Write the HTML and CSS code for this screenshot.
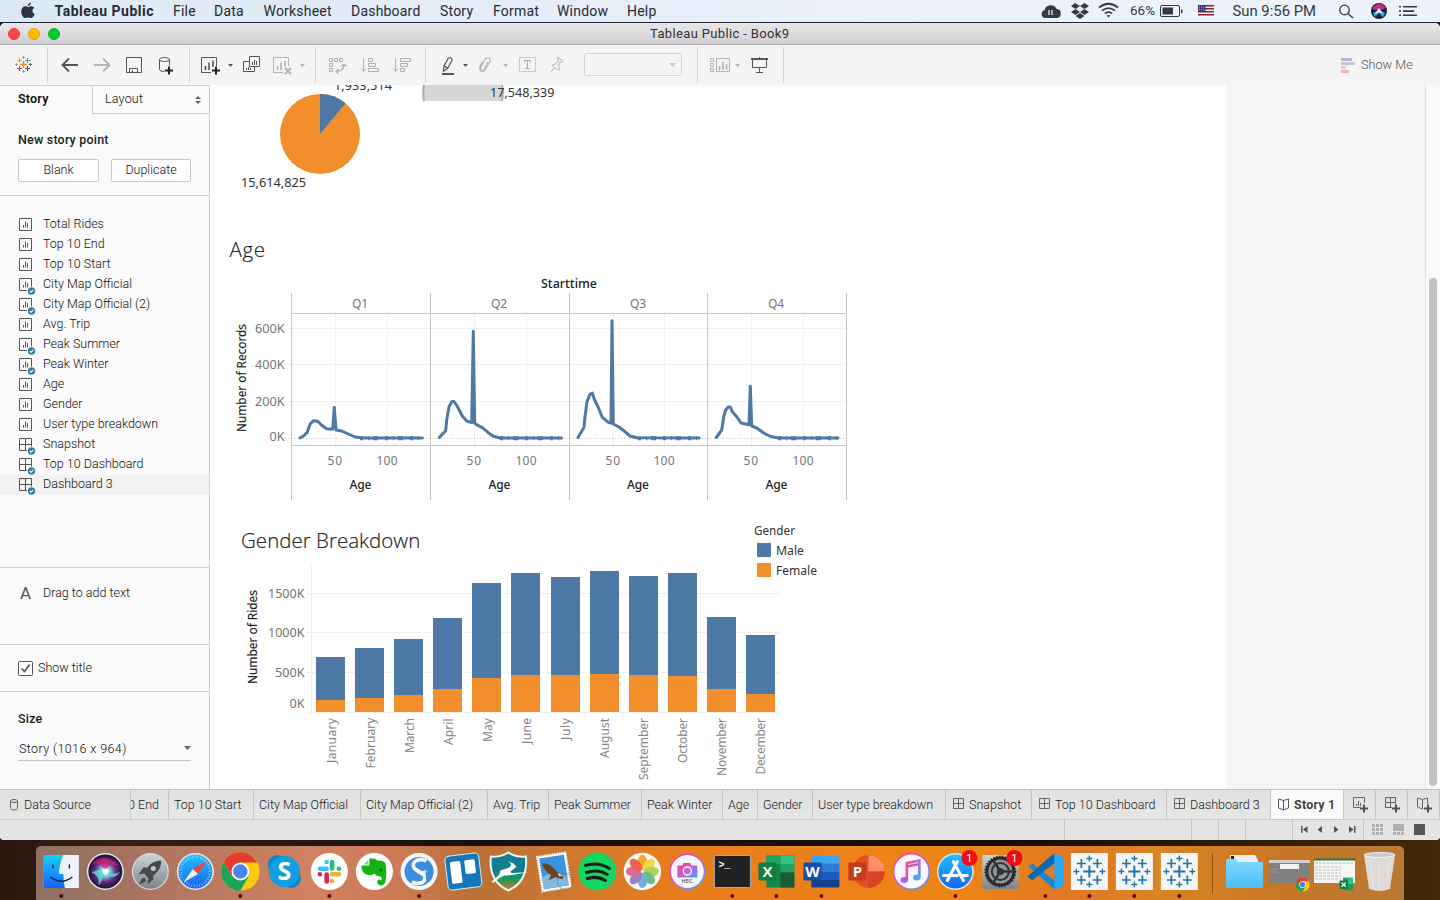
FILE: index.html
```html
<!DOCTYPE html>
<html lang="en">
<head>
<meta charset="utf-8">
<title>Tableau Public - Book9</title>
<link rel="stylesheet" href="styles.css">
</head>
<body>
<svg class="defs" width="0" height="0">
  <defs>
    <linearGradient id="gBlue" x1="0" y1="0" x2="0" y2="1"><stop offset="0" stop-color="#1fc2fb"/><stop offset="1" stop-color="#1a63f0"/></linearGradient>
    <linearGradient id="gFinder" x1="0" y1="0" x2="0" y2="1"><stop offset="0" stop-color="#14d0fd"/><stop offset="1" stop-color="#1662f5"/></linearGradient>
    <linearGradient id="gGrey" x1="0" y1="0" x2="0" y2="1"><stop offset="0" stop-color="#c9d3d8"/><stop offset="1" stop-color="#808587"/></linearGradient>
    <linearGradient id="gNote" x1="0" y1="0" x2="1" y2="1"><stop offset="0" stop-color="#fb4470"/><stop offset=".5" stop-color="#c85ce0"/><stop offset="1" stop-color="#35a9f7"/></linearGradient>
    <linearGradient id="gShield" x1="0" y1="0" x2="0" y2="1"><stop offset="0" stop-color="#137e98"/><stop offset=".5" stop-color="#137e88"/><stop offset=".7" stop-color="#159c5a"/><stop offset="1" stop-color="#e86a1c"/></linearGradient>
    <linearGradient id="gFolder" x1="0" y1="0" x2="0" y2="1"><stop offset="0" stop-color="#7fdcff"/><stop offset="1" stop-color="#4fbcf3"/></linearGradient>
    <radialGradient id="gSiri"><stop offset="0" stop-color="#fff"/><stop offset=".25" stop-color="#8fd8ea"/><stop offset=".6" stop-color="#6b2a86"/><stop offset="1" stop-color="#171230"/></radialGradient>
    <symbol id="sheet" viewBox="0 0 18 18"><path d="M.5 1.500h12v12h-12zM4.500 10.500V8M6.500 10.500V4.500M8.500 10.500V6" fill="none" stroke="#555"/></symbol>
    <symbol id="dash" viewBox="0 0 18 18"><path d="M.5 1.500h12v12h-12zM6.500 1.500v12M.5 7.500h12" fill="none" stroke="#555"/></symbol>
    <symbol id="check" viewBox="0 0 18 18"><circle cx="12.500" cy="14" r="4.600" fill="#fafafa"/><circle cx="12.500" cy="14" r="3.700" fill="#2e7fa3"/><path d="M10.800 14l1.300 1.300 2.200-2.500" fill="none" stroke="#fff" stroke-width="1.100"/></symbol>
    <symbol id="tableau" viewBox="-22 -22 44 44" overflow="visible">
      <path d="M-18.500-18.500h37v37h-37z" fill="#f4f6f8"/>
      <g fill="none" stroke="#2274a6" stroke-width="2"><path d="M-6 0h12M0-6v12"/><path stroke-width="1.700" d="M-12.500-8h9M-8-12.500v9M3.500-8h9M8-12.500v9M-12.500 8.500h9M-8 4v9M3.500 8.500h9M8 4v9"/><path stroke-width="1.300" d="M-3-13h6M0-16v6M-3 13h6M0 10v6M-16 0h6M-13-3v6M10 0h6M13-3v6"/></g>
    </symbol>
    <symbol id="chrome" viewBox="-20 -20 40 40" overflow="visible">
      <circle r="19.300" fill="#fbc90e"/><path d="M-16.700-9.600L-8.400 4.800-3 8.500 0 19.300A19.300 19.300 0 0 1-16.700-9.600z" fill="#1da45a"/><path d="M0 19.300L8.400 4.700-8 4z" fill="#1da45a"/><path d="M0-19.300A19.300 19.300 0 0 1 16.700-9H0L-8 5-16.700-9.600A19.300 19.300 0 0 1 0-19.300z" fill="#e33b2e"/>
      <circle r="8.900" fill="#fff"/><circle r="7.200" fill="#4a83ee"/>
    </symbol>
    <symbol id="xbadge" viewBox="0 0 20 20"><path d="M5 1h14v18H5z" fill="#1d9c5b"/><path d="M12 1h7v9h-7z" fill="#2fc77f"/><path d="M0 5h12v12H0z" fill="#107c41"/><path d="M3 8l6 6M9 8l-6 6" stroke="#fff" stroke-width="1.800"/></symbol>
  </defs>
</svg>

<header class="menubar">
  <svg class="apple" width="16" height="18" viewBox="0 0 16 18"><path d="M10.800.8c.1 1.600-1.300 3.200-2.900 3.200C7.700 2.500 9.200.9 10.800.8zM8 5c.8 0 1.700-.9 3.200-.8 1.200.1 2.300.6 3 1.600-2.600 1.600-2.200 5.200.5 6.300-.5 1.500-1.900 4-3.500 4-1.200 0-1.600-.7-3-.7s-1.900.7-3 .7C3.300 16.100 1.200 12.700 1.200 9.500c0-3.200 2-5.200 4-5.200C6.500 4.300 7.300 5 8 5z" fill="#2c333c"/></svg>
  <nav class="menus"><b class="m0">Tableau Public</b><span class="m1">File</span><span class="m2">Data</span><span class="m3">Worksheet</span><span class="m4">Dashboard</span><span class="m5">Story</span><span class="m6">Format</span><span class="m7">Window</span><span class="m8">Help</span></nav>
  <svg class="tray" width="410" height="22" viewBox="1030 0 410 22" fill="#333a43">
    <path d="M1045 18a4 4 0 0 1-.5-7.800 6.500 6.500 0 0 1 12-1.500 4.700 4.700 0 0 1 .5 9.300z"/><path d="M1049 10v5M1052 10v5" stroke="#eaf0f8" stroke-width="1.300"/>
    <path d="M1075 3l5 3-4.500 3-4.500-3zM1084.500 3l4.500 3-4.500 3-4.500-3zM1071 12l4.500-3 4.500 3-4.500 3zM1080 12l4.500-3 4.500 3-4.500 3zM1075.500 16l4.500-3 4.500 3-4.500 3z"/>
    <g fill="none" stroke="#333a43" stroke-width="1.700"><path d="M1099 7.500q9.500-7.500 19 0M1102 10.600q6.500-5 13 0M1105 13.500q3.500-2.700 7 0"/></g><path d="M1106.500 15.300h4l-2 2.300z"/>
    <text x="1130" y="15" textLength="25" lengthAdjust="spacingAndGlyphs" class="tray-pct">66%</text>
    <rect x="1160.500" y="5.500" width="19" height="11" rx="1.500" fill="none" stroke="#333a43"/><path d="M1162.500 7.500h10.500v7h-10.500zM1181 9.500h1.500v3.500h-1.500z"/>
    <path d="M1198 5h16v11h-16z" fill="#eee"/><path d="M1198 5.700h16M1198 8.700h16M1198 11.700h16M1198 14.700h16" stroke="#8c2232" stroke-width="1.400"/><path d="M1198 5h7.500v6.500h-7.500z" fill="#3a397c"/><path d="M1199 7h6M1199 9.500h6" stroke="#bbb" stroke-dasharray="1 1"/>
    <text x="1232.500" y="16" textLength="83.500" lengthAdjust="spacingAndGlyphs" class="tray-clock">Sun 9:56 PM</text>
    <circle cx="1344.500" cy="10" r="4.800" fill="none" stroke="#333a43" stroke-width="1.300"/><path d="M1348 13.500l5 4.500" stroke="#333a43" stroke-width="1.500"/>
    <circle cx="1379" cy="11" r="8" fill="#172041"/><path d="M1372.500 9a7 7 0 0 1 13-1l-6.500 3z" fill="#c3288f"/><path d="M1373 13l6-3 6 3-2 4-4-4-4 4z" fill="#3fa3dc"/><path d="M1379 8l-4 6 4-2 4 2z" fill="#fff"/>
    <path d="M1399 6h2v1.500h-2zM1399 10.300h2v1.500h-2zM1399 14.500h2v1.500h-2zM1403 6h14v1.600h-14zM1403 10.300h11v1.600h-11zM1403 14.500h14v1.600h-14z"/>
  </svg>
</header>

<main class="window">
  <div class="titlebar"><div class="lights"><i class="red"></i><i class="amber"></i><i class="green"></i></div><span>Tableau Public - Book9</span></div>

  <div class="toolbar">
    <svg class="group" width="48" height="36" viewBox="0 47 48 36" fill="none"><path d="M20 64.500h7M23.500 61v7" stroke="#eb8c32" stroke-width="1.600"/><path d="M17 60.500h5M19.500 58v5" stroke="#e5a04c"/><path d="M25 60.500h5M27.500 58v5" stroke="#5d8f9c"/><path d="M17 68.500h5M19.500 66v5" stroke="#c4364e"/><path d="M25 68.500h5M27.500 66v5" stroke="#35507c"/><path d="M22 57.500h3M23.500 56v3M22 71.500h3M23.500 70v3M15 64.500h3M16.500 63v3" stroke="#8ba4c0"/><path d="M29 64.500h3M30.500 63v3" stroke="#6c5f98"/></svg>
    <svg class="group" width="142" height="36" viewBox="48 47 142 36" fill="none" stroke="#555">
      <path d="M78 65H63M69 58.500L62.500 65l6.500 6.500" stroke-width="1.800"/><path d="M94 65h15M103 58.500l6.500 6.500-6.500 6.500" stroke="#b4b4b4" stroke-width="1.800"/>
      <path d="M126.500 57.500h15v15h-15zM129.500 72.500v-4h8v4M132.500 72v-2"/><path d="M159.500 59.500v10q0 2 5 2M169.500 59.500v6"/><ellipse cx="164.500" cy="59.500" rx="5" ry="2"/><path d="M165 70.500h8M169 66.500v8" stroke="#222" stroke-width="2"/>
    </svg>
    <svg class="group" width="126" height="36" viewBox="190 47 126 36" fill="none" stroke="#555">
      <path d="M211 72.500h-9.500v-15h15V66"/><path d="M205.500 70v-4M209 70v-7.500M213 67v-6.500" stroke-width="1.600"/><path d="M212 70.500h8M216 66.500v8" stroke="#222" stroke-width="2"/><path d="M228 64h5l-2.500 3z" fill="#555" stroke="none"/>
      <path d="M249.500 56.500h10v10h-10zM252.500 65v-3M254.500 65v-5M256.500 65v-4M249 61.500h-5.500v10h11V67M246.500 70v-2M248.500 70v-3M250.500 70v-2"/>
      <g stroke="#b4b4b4"><path d="M283 72.500h-9.500v-15h15V66"/><path d="M277.500 70v-4M281 70v-7.500M285 66v-5" stroke-width="1.600"/><path d="M285 68l6 6M291 68l-6 6" stroke-width="2"/></g><path d="M300 64h5l-2.500 3z" fill="#b4b4b4" stroke="none"/>
    </svg>
    <svg class="group" width="110" height="36" viewBox="316 47 110 36" fill="none" stroke="#b0b0b0">
      <path d="M329.500 58.500h3v3h-3zM334.500 58.500h3v3h-3zM339.500 58.500h3v3h-3zM329.500 63.500h3v3h-3zM329.500 68.500h3v3h-3z"/><path d="M336 71.500q8 0 8-7M341.500 66.500l2.500-2.500 2.500 2.500M338.500 69l-2.500 2.500 2.500 2.500" stroke-width="1.200"/>
      <path d="M363.500 58v13M361 68.500l2.500 3 2.500-3M368.500 58.500h4v3h-4zM368.500 63.500h7v3h-7zM368.500 68.500h10v3h-10z"/><path d="M395.500 58v13M393 68.500l2.500 3 2.500-3M400.500 58.500h10v3h-10zM400.500 63.500h7v3h-7zM400.500 68.500h4v3h-4z"/>
    </svg>
    <svg class="group" width="272" height="36" viewBox="426 47 272 36" fill="none" stroke="#555">
      <path d="M443.500 71l.5-5 4.500-8q1-1 2.500 0t1 2.500l-4.500 8zM444.500 66l3.500 2.500" stroke-width="1.200"/><path d="M442 74h12" stroke-width="2"/><path d="M463 64h5l-2.500 3z" fill="#555" stroke="none"/>
      <path d="M482 62l-2 4.500q-1 4 1.500 5t4-2l4.500-8q1-3-1.500-3.500t-4 2l-4 8q0 2 1.500 2t2-1l4-7" stroke="#b4b4b4" stroke-width="1.200"/><path d="M503 64h5l-2.500 3z" fill="#b4b4b4" stroke="none"/>
      <path d="M519.500 57.500h16v14h-16z" stroke="#b4b4b4" stroke-dasharray="2 1"/><path d="M524.500 62.500v-2h6v2M527.500 60.500v8M525.500 68.500h4" stroke="#aaa"/>
      <path d="M557 57l6 4-1 1.500-2-.5-1.500 4 1.500 3-1.500 1-6-4 .5-1.500 3-.5 2.500-4zM555 67l-4 5" stroke="#b4b4b4"/>
      <rect x="584.500" y="53.500" width="97" height="22" rx="1" stroke="#d3d3d3"/><path d="M669 63h7l-3.500 4z" fill="#c8c8c8" stroke="none"/>
    </svg>
    <svg class="group" width="86" height="36" viewBox="698 47 86 36" fill="none" stroke="#b4b4b4">
      <path d="M710.500 58.500h3v3h-3zM710.500 63.500h3v3h-3zM710.500 68.500h3v3h-3zM716.500 58.500h13v13h-13z"/><path d="M719.500 70v-4M723 70v-8.500M726.500 70v-6" stroke-width="1.700"/><path d="M735 64h5l-2.500 3z" fill="#b4b4b4" stroke="none"/>
      <g stroke="#555"><path d="M751 59h17" stroke-width="2"/><path d="M752.500 59v8.500h14V59M759.500 57v2M759.500 67.500v5M756 72.500h7"/></g>
    </svg>
    <div class="showme"><svg width="15" height="16"><path d="M0 1h11v3H0z" fill="#bcb2c8"/><path d="M0 5h14v3H0z" fill="#b8cbe2"/><path d="M0 9h5v3H0z" fill="#f3cfb4"/><path d="M0 13h8v3H0z" fill="#f5b3b9"/></svg><span>Show Me</span></div>
  </div>

  <div class="body">
    <aside class="side">
      <div class="sidetabs"><b>Story</b><div class="layout"><span>Layout</span><svg width="6" height="8"><path d="M0 3l3-3 3 3zM0 5h6L3 8z" fill="#666"/></svg></div></div>
      <section class="newpoint"><h3>New story point</h3><div class="btns"><button>Blank</button><button>Duplicate</button></div></section>
      <ul class="sheets">
        <li><svg><use href="#sheet"/></svg>Total Rides</li>
        <li><svg><use href="#sheet"/></svg>Top 10 End</li>
        <li><svg><use href="#sheet"/></svg>Top 10 Start</li>
        <li><svg><use href="#sheet"/><use href="#check"/></svg>City Map Official</li>
        <li><svg><use href="#sheet"/><use href="#check"/></svg>City Map Official (2)</li>
        <li><svg><use href="#sheet"/></svg>Avg. Trip</li>
        <li><svg><use href="#sheet"/><use href="#check"/></svg>Peak Summer</li>
        <li><svg><use href="#sheet"/><use href="#check"/></svg>Peak Winter</li>
        <li><svg><use href="#sheet"/></svg>Age</li>
        <li><svg><use href="#sheet"/></svg>Gender</li>
        <li><svg><use href="#sheet"/></svg>User type breakdown</li>
        <li><svg><use href="#dash"/><use href="#check"/></svg>Snapshot</li>
        <li><svg><use href="#dash"/><use href="#check"/></svg>Top 10 Dashboard</li>
        <li class="on"><svg><use href="#dash"/><use href="#check"/></svg>Dashboard 3</li>
      </ul>
      <section class="dragtext"><span class="bigA">A</span>Drag to add text</section>
      <section class="showtitle"><svg width="15" height="15"><rect x=".5" y=".5" width="14" height="14" rx="1" fill="#fff" stroke="#555"/><path d="M3.500 7.500l3 3 5-7" fill="none" stroke="#555" stroke-width="1.700"/></svg><span>Show title</span></section>
      <section class="size"><h3>Size</h3><div class="select">Story (1016 x 964)<svg width="7" height="4"><path d="M0 0h7L3.500 4z" fill="#666"/></svg></div></section>
    </aside>

    <div class="canvas">
      <svg class="chart" width="660" height="148" viewBox="210 85 660 148">
        <text x="334" y="90" textLength="58" lengthAdjust="spacingAndGlyphs">1,933,514</text>
        <circle cx="320" cy="134" r="40" fill="#f28e2b"/><path d="M320 134V94A40 40 0 0 1 345.500 103.200z" fill="#4e79a7"/>
        <text x="241" y="187" textLength="65" lengthAdjust="spacingAndGlyphs">15,614,825</text>
        <path d="M424 85h78v16h-78z" fill="#d6d6d6"/><path d="M424 85q-1.500 8 0 16M502 85q1.500 8 0 16" fill="none" stroke="#aaa" stroke-width="2"/>
        <text x="490" y="97" textLength="64.500" lengthAdjust="spacingAndGlyphs">17,548,339</text>
      </svg>
      <h2 class="age-title">Age</h2>
      <svg class="chart" width="660" height="237" viewBox="210 268 660 237">
        <path d="M287 328.500h560M287 364.500h560M287 401.500h560M335.500 314v136M387.500 314v136M474.500 314v136M526.500 314v136M613.500 314v136M664.500 314v136M751.500 314v136M803.500 314v136" stroke="#f1f1f1"/>
        <path d="M285 438.500h562" stroke="#c8c8c8" stroke-dasharray="1 2"/>
        <path d="M291.500 293v207M430.500 293v207M569.500 293v207M707.500 293v207M846.500 293v207M291 313.500h556M291 445.500h556" stroke="#c6c6c6"/>
        <g fill="none" stroke="#4e79a7" stroke-width="3" stroke-linejoin="round" stroke-linecap="round">
          <path d="M300 438l3.500-2 3.500-3.300 3-8.400 3.300-3.600 4.400.6 4 4 5 3.400 6 .6 1.600-22 1.700 22.700 5.700 1 6.600 3 6.700 3 10 1h57.300"/>
          <path d="M439.300 437.500l6.400-6.800 1-10.700 2.300-13.300 2.700-5 2-.4 3.300 4.400 5.300 10.300 4.400 5 5 1.700 1.600-91.400 1.400 92 3.600 2.400 4 2 6 5 5 3.600 6.700 1.700h61.500"/>
          <path d="M578 437.500l6-10.200 1-10.600 2-15 2.700-7 2.600-1.700 2 6.300 3.400 6.700 4.600 11.300 6 5 2.700.7 1-102.300 1.300 103.300 5.700 3 6 4.700 5 4.300 6.700 1.700 62.500.3"/>
          <path d="M716.300 437.500l5.400-7.500 2-13.300 2-6.700 2.600-3h2l2 4.700 4.400 5 4.300 6.300 8 1.700 1.300-38.400 1.400 39.700 5 2 6.600 4.700 6.700 3.600 8 1.700h60"/>
        </g>
        <path d="M360 438.300h62M500 438.300h61M638 438.300h62M778 438.300h60" stroke="#4e79a7" stroke-width="4" stroke-dasharray="3 5 1 4 5 7"/>
        <g class="bold"><text x="541" y="288" textLength="56" lengthAdjust="spacingAndGlyphs">Starttime</text><text x="349.500" y="489" textLength="22">Age</text><text x="488.500" y="489" textLength="22">Age</text><text x="627" y="489" textLength="22">Age</text><text x="765.500" y="489" textLength="22">Age</text></g>
        <g class="axis"><text transform="translate(245.500 432) rotate(-90)" textLength="108" lengthAdjust="spacingAndGlyphs">Number of Records</text></g>
        <g class="grey"><text x="352" y="308" textLength="16">Q1</text><text x="491" y="308" textLength="16">Q2</text><text x="630" y="308" textLength="16">Q3</text><text x="768" y="308" textLength="16">Q4</text>
        <text x="255" y="333" textLength="29.500" lengthAdjust="spacingAndGlyphs">600K</text><text x="255" y="369" textLength="29.500" lengthAdjust="spacingAndGlyphs">400K</text><text x="255" y="406" textLength="29.500" lengthAdjust="spacingAndGlyphs">200K</text><text x="269.500" y="441" textLength="15" lengthAdjust="spacingAndGlyphs">0K</text>
        <text x="327.500" y="465" textLength="14.500">50</text><text x="376.500" y="465" textLength="21">100</text><text x="466.500" y="465" textLength="14.500">50</text><text x="515.500" y="465" textLength="21">100</text><text x="605.500" y="465" textLength="14.500">50</text><text x="653.500" y="465" textLength="21">100</text><text x="743.500" y="465" textLength="14.500">50</text><text x="792.500" y="465" textLength="21">100</text></g>
      </svg>
      <div class="gender-row">
        <div class="gender-main">
          <h2>Gender Breakdown</h2>
          <svg class="chart" width="572" height="229" viewBox="210 560 572 229">
            <path d="M306 593.500h474M306 632.500h474M306 672.500h474M306 712.500h474M311.500 564v152M350.500 713v4M389.500 713v4M428.500 713v4M467.500 713v4M506.500 713v4M545.500 713v4M584.500 713v4M623.500 713v4M662.500 713v4M701.500 713v4M740.500 713v4" stroke="#f0f0f0"/>
            <path d="M316 657h29v43h-29zM355 648h29v50h-29zM394 639h29v56h-29zM433 618h29v71h-29zM472 583h29v95h-29zM511 573h29v102h-29zM551 577h29v98h-29zM590 571h29v103h-29zM629 576h29v99h-29zM668 573h29v103h-29zM707 617h29v72h-29zM746 635h29v59h-29z" fill="#4e79a7"/>
            <path d="M316 700h29v12h-29zM355 698h29v14h-29zM394 695h29v17h-29zM433 689h29v23h-29zM472 678h29v34h-29zM511 675h29v37h-29zM551 675h29v37h-29zM590 674h29v38h-29zM629 675h29v37h-29zM668 676h29v36h-29zM707 689h29v23h-29zM746 694h29v18h-29z" fill="#f28e2b"/>
            <g class="grey"><text x="268" y="598" textLength="36.500" lengthAdjust="spacingAndGlyphs">1500K</text><text x="268" y="637" textLength="36.500" lengthAdjust="spacingAndGlyphs">1000K</text><text x="275" y="677" textLength="29.500" lengthAdjust="spacingAndGlyphs">500K</text><text x="289.500" y="708" textLength="15" lengthAdjust="spacingAndGlyphs">0K</text></g>
            <g class="axis"><text transform="translate(257 684) rotate(-90)" textLength="94" lengthAdjust="spacingAndGlyphs">Number of Rides</text></g>
            <g class="grey months">
              <text transform="translate(336 763) rotate(-90)" textLength="45">January</text><text transform="translate(375 768.500) rotate(-90)" textLength="51">February</text><text transform="translate(414 753) rotate(-90)" textLength="35">March</text><text transform="translate(453 745) rotate(-90)" textLength="26.500">April</text><text transform="translate(492 742) rotate(-90)" textLength="24">May</text><text transform="translate(531 744) rotate(-90)" textLength="26">June</text><text transform="translate(570 740) rotate(-90)" textLength="22">July</text><text transform="translate(609 758) rotate(-90)" textLength="40">August</text><text transform="translate(648 780) rotate(-90)" textLength="62">September</text><text transform="translate(687 763) rotate(-90)" textLength="45">October</text><text transform="translate(726 776) rotate(-90)" textLength="58">November</text><text transform="translate(765 774.500) rotate(-90)" textLength="56.500">December</text>
            </g>
          </svg>
        </div>
        <svg class="chart legend" width="80" height="64" viewBox="750 520 80 64"><g class="dark"><text x="754" y="535" textLength="41" lengthAdjust="spacingAndGlyphs">Gender</text><path d="M757 543h14v14h-14z" fill="#4e79a7"/><text x="776" y="555" textLength="28" lengthAdjust="spacingAndGlyphs">Male</text><path d="M757 563h14v14h-14z" fill="#f28e2b"/><text x="776" y="575" textLength="41" lengthAdjust="spacingAndGlyphs">Female</text></g></svg>
      </div>
    </div>
    <div class="gutter"></div>
    <div class="scroll"><i></i></div>
  </div>

  <div class="tabs">
    <div class="tab t-src"><svg width="9" height="12"><path d="M.5 2v7.500q0 1.500 3.500 1.500t3.500-1.500V2Q7.500.5 4 .5T.5 2q0 1.500 3.500 1.500T7.500 2" fill="none" stroke="#666"/></svg>Data Source</div>
    <div class="tab t-cut"><span>Top 10 End</span></div>
    <div class="tab w85">Top 10 Start</div><div class="tab w107">City Map Official</div><div class="tab w127">City Map Official (2)</div><div class="tab w61">Avg. Trip</div><div class="tab w93">Peak Summer</div><div class="tab w81">Peak Winter</div><div class="tab w35">Age</div><div class="tab w55">Gender</div><div class="tab w133">User type breakdown</div>
    <div class="tab w86 ic"><svg width="12" height="13"><path d="M.5.5h10v10h-10zM5.500.5v10M.5 5.500h10" fill="none" stroke="#666"/></svg>Snapshot</div>
    <div class="tab w135 ic"><svg width="12" height="13"><path d="M.5.5h10v10h-10zM5.500.5v10M.5 5.500h10" fill="none" stroke="#666"/></svg>Top 10 Dashboard</div>
    <div class="tab w104 ic"><svg width="12" height="13"><path d="M.5.5h10v10h-10zM5.500.5v10M.5 5.500h10" fill="none" stroke="#666"/></svg>Dashboard 3</div>
    <div class="tab w73 ic active"><svg width="12" height="13"><path d="M.5 1l5 1.500 5-1.500v9l-5 2-5-2zM5.500 2.500V12" fill="none" stroke="#555"/></svg>Story 1</div>
    <div class="tab w32"><svg width="18" height="16"><path d="M8 10.500H.5V.5h11V6M3.500 9V7M5.500 9V4M7.500 9V6" fill="none" stroke="#666"/><path d="M7 11.500h8M11 7.500v8" stroke="#555" stroke-width="2"/></svg></div>
    <div class="tab w32"><svg width="18" height="16"><path d="M7 10.500H.5V.5h10V7M5.500.5v10M.5 5.500h10" fill="none" stroke="#666"/><path d="M7 11.500h8M11 7.500v8" stroke="#555" stroke-width="2"/></svg></div>
    <div class="tab w32"><svg width="18" height="16"><path d="M10.500 7V1l-5 1.500L.5 1v9l5 2V2.500" fill="none" stroke="#666"/><path d="M7 11.500h8M11 7.500v8" stroke="#555" stroke-width="2"/></svg></div>
  </div>
  <div class="status"><svg width="380" height="20" viewBox="1060 820 380 20">
    <path d="M1064.500 820v20M1191.500 820v20M1218.500 820v20M1245.500 820v20M1292.500 820v20M1363.500 820v20" stroke="#c4c4c4"/>
    <path d="M1301 826h1.500v7h-1.500zM1307.500 826v7l-4.500-3.500zM1322 826v7l-4.500-3.500zM1334 826v7l4.500-3.500zM1349 826v7l4.500-3.500zM1354 826h1.500v7h-1.500z" fill="#555"/>
    <path d="M1372 824h3v3h-3zM1376 824h3v3h-3zM1380 824h3v3h-3zM1372 828h3v3h-3zM1376 828h3v3h-3zM1380 828h3v3h-3zM1372 832h3v3h-3zM1376 832h3v3h-3zM1380 832h3v3h-3zM1393 824h11v7h-11zM1393 832h3v3h-3zM1397 832h3v3h-3zM1401 832h3v3h-3z" fill="#b0b0b0"/><path d="M1414 824h11v11h-11z" fill="#555"/>
  </svg></div>
</main>

<footer class="desktop"><div class="dock">
  <svg class="app" viewBox="-22.370 -25.500 44.740 54"><path d="M-17.500-16.500h35v33h-35z" fill="#eef1f8"/><path d="M-17.500-16.500H2q-4 9-4.500 19H2q0 7 1.500 14h-21z" fill="url(#gFinder)"/><path d="M-8.500-7v4M8-7v4M-11 5.500Q0 14 11 5.500" fill="none" stroke="#13253a" stroke-width="1.400"/><circle class="dot" cx="0" cy="24.500" r="2"/></svg>
  <svg class="app" viewBox="-22.370 -25.500 44.740 54"><circle r="18.500" fill="#e8e8ee"/><circle r="17" fill="url(#gSiri)"/><path d="M-14-8Q0-20 14-6 2-8 0 0-4-10-14-8z" fill="#cc1f78" opacity=".75"/><path d="M-14 1Q-4-4 0 0 10 4 15 0 8 10 0 1-5 13-7 14-5 4-14 1z" fill="#51dfd8" opacity=".8"/><circle r="3" fill="#fff"/></svg>
  <svg class="app" viewBox="-22.370 -25.500 44.740 54"><circle r="18.500" fill="#d7dadb"/><circle r="17.300" fill="url(#gGrey)"/><path d="M11-11q-9 0-14 7h-4l-5 7 6-1 4 5-1 6 6-5V4q8-6 8-15z" fill="#44494d"/><circle cx="3" cy="-3" r="2.500" fill="#c1c7c9"/><path d="M-6 6q-4 1-5 7 5-2 7-4z" fill="#44494d"/></svg>
  <svg class="app" viewBox="-22.370 -25.500 44.740 54"><circle r="18.500" fill="#e8ebef"/><circle r="17" fill="url(#gBlue)"/><circle r="14.500" fill="none" stroke="#fff" stroke-opacity=".7" stroke-width="2.500" stroke-dasharray=".6 2"/><path d="M12-11L2.500 2.500-2.500-2.500z" fill="#f34436"/><path d="M-12 11L-2.500-2.500 2.500 2.500z" fill="#eee"/></svg>
  <svg class="app" viewBox="-22.370 -25.500 44.740 54"><use href="#chrome" x="-20" y="-20" width="40" height="40"/><circle class="dot" cx="0" cy="24.500" r="2"/></svg>
  <svg class="app" viewBox="-22.370 -25.500 44.740 54"><circle cx="-7" cy="-7" r="9.500" fill="#0c87c9"/><circle cx="7" cy="7" r="9.500" fill="#0c87c9"/><circle r="15.500" fill="#0f9fe3"/><text x="0" y="8.500" class="logo" font-size="25" text-anchor="middle">S</text></svg>
  <svg class="app" viewBox="-22.370 -25.500 44.740 54"><circle r="18.600" fill="#fff"/><g stroke-width="4.600" stroke-linecap="round"><path d="M-2.700-9.500v0M-9.500-2.700h6.800" stroke="#36c5f0"/><path d="M2.700-9.500v6.500M9.500-2.700v0" stroke="#2eb67d"/><path d="M2.700 2.700h7M2.700 9.500v0" stroke="#ecb22e"/><path d="M-2.700 3v7M-9.500 2.700v0" stroke="#e01e5a"/></g><circle class="dot" cx="0" cy="24.500" r="2"/></svg>
  <svg class="app" viewBox="-22.370 -25.500 44.740 54"><circle r="18.600" fill="#fff"/><path d="M-5-13h5l3 2q7 0 8 3 2 10 0 18-1 4-5 4-4-1-3-5 2-2 4 0 1-3-1-4-4 0-6-3-3 3-8 1-5-2-5-9h8z" fill="#14b314"/><path d="M-6-12v5h-5z" fill="#8bdc80"/><circle cx="6.500" cy="-1.500" r="1.500" fill="#075d18"/></svg>
  <svg class="app" viewBox="-22.370 -25.500 44.740 54"><circle cx=".7" r="18.600" fill="#f3f5f7"/><circle cx=".7" r="14.500" fill="#3b8ede"/><path d="M8-10.500Q3-13-2-11-7-8-4-3L9 6M-6.500 10.500Q-1 13 4 11 9 8 6-1" fill="none" stroke="#f3f5f7" stroke-width="3.600"/><path d="M-4-3Q-1 0 4 1.500 8 4 6 8" fill="none" stroke="#f3f5f7" stroke-width="3.600"/><path d="M7-1l5 8-4 3z" fill="#3b8ede"/><circle class="dot" cx=".7" cy="24.500" r="2"/></svg>
  <svg class="app" viewBox="-22.370 -25.500 44.740 54"><g transform="rotate(-7)"><rect x="-17" y="-17" width="34" height="34" rx="4" fill="#1277bd" stroke="#d8e7f1"/><rect x="-12.500" y="-11" width="10.500" height="22" rx="1.500" fill="#fff"/><rect x="2" y="-11" width="10.500" height="14" rx="1.500" fill="#fff"/></g></svg>
  <svg class="app" viewBox="-22.370 -25.500 44.740 54"><path d="M0-19q8 5 17.500 4Q20 10 0 19-20 10-17.500-15-8-14 0-19z" fill="url(#gShield)" stroke="#eaf5f3" stroke-width="2"/><path d="M-17 10.500L-9 3l1-4 9-3 2-3-3-3 5 2 3 3-2 2-4 3 1 1.500 17-.8-18 3-7 .5-5 3-5 4z" fill="#fff"/></svg>
  <svg class="app" viewBox="-22.370 -25.500 44.740 54"><g transform="rotate(-9)"><path d="M-14-17h29v35h-29z" fill="#f5f5f5" stroke="#f5f5f5" stroke-width="2" stroke-dasharray="1.500 1"/><path d="M-12-15h25v31h-25z" fill="#3d93dd"/><path d="M-12 4q12-6 25 4v8h-25z" fill="#83b8df"/><path d="M-10-10q9 1 12 9l7 7-1 3-7-3-7 2 3-5q-6-5-7-13z" fill="#69441e"/><path d="M4 2l5 4-4-.500z" fill="#eee"/></g><circle cx="12" cy="10" r="8" fill="none" stroke="#7a6857" opacity=".6"/></svg>
  <svg class="app" viewBox="-22.370 -25.500 44.740 54"><circle r="19" fill="#12d760"/><path d="M-12-6q13-4 24 3M-11 1q12-4 21 2M-10 7q10-3 18 2" fill="none" stroke="#191919" stroke-width="3" stroke-linecap="round"/></svg>
  <svg class="app" viewBox="-22.370 -25.500 44.740 54"><circle r="18.700" fill="#f8f8f6"/><g opacity=".88"><ellipse cy="-9" rx="4.800" ry="7.500" fill="#f69a1b"/><ellipse cy="-9" rx="4.800" ry="7.500" fill="#efd42a" transform="rotate(45)"/><ellipse cy="-9" rx="4.800" ry="7.500" fill="#a3cf45" transform="rotate(90)"/><ellipse cy="-9" rx="4.800" ry="7.500" fill="#57b879" transform="rotate(135)"/><ellipse cy="-9" rx="4.800" ry="7.500" fill="#62a8d7" transform="rotate(180)"/><ellipse cy="-9" rx="4.800" ry="7.500" fill="#8e72c0" transform="rotate(225)"/><ellipse cy="-9" rx="4.800" ry="7.500" fill="#d75b8e" transform="rotate(270)"/><ellipse cy="-9" rx="4.800" ry="7.500" fill="#ef4b3c" transform="rotate(315)"/></g></svg>
  <svg class="app" viewBox="-22.370 -25.500 44.740 54"><circle r="17.300" fill="#f7f5f9" stroke="url(#gNote)" stroke-width="1.700"/><path d="M-10-6h5l1-2.500h7L4-6h6V6h-20z" fill="url(#gNote)"/><circle r="4" cy="-.5" fill="none" stroke="#fff" stroke-width="1.400"/><text x="0" y="12" class="heic" text-anchor="middle">HEIC</text></svg>
  <svg class="app" viewBox="-22.370 -25.500 44.740 54"><path d="M-18-16h36v32h-36z" fill="#222" stroke="#aaa9a0"/><text x="-14" y="-4" class="term">&gt;_</text><circle class="dot" cx="0" cy="24.500" r="2"/></svg>
  <svg class="app" viewBox="-22.370 -25.500 44.740 54"><path d="M-10-16h28v32h-28z" fill="#12864b"/><path d="M-10-16H4v9h-14z" fill="#21a366"/><path d="M4-16h14v9H4z" fill="#33c481"/><path d="M4-7h14V1H4z" fill="#21a366"/><path d="M4 1h14v15H4z" fill="#185c37"/><rect x="-18" y="-9" width="18" height="18" rx="1.500" fill="#107c41"/><text x="-9" y="5.500" class="logo" font-size="15" text-anchor="middle">X</text><circle class="dot" cx="0" cy="24.500" r="2"/></svg>
  <svg class="app" viewBox="-22.370 -25.500 44.740 54"><path d="M-10-16h28v8h-28z" fill="#41a5ee"/><path d="M-10-8h28v8h-28z" fill="#2b7cd3"/><path d="M-10 0h28v8h-28z" fill="#185abd"/><path d="M-10 8h28v8h-28z" fill="#143f8f"/><rect x="-18" y="-9" width="18" height="18" rx="1.500" fill="#174ea8"/><text x="-9" y="5.500" class="logo" font-size="15" text-anchor="middle">W</text><circle class="dot" cx="0" cy="24.500" r="2"/></svg>
  <svg class="app" viewBox="-22.370 -25.500 44.740 54"><circle cx="2" r="16.300" fill="#e24d2b"/><path d="M2-16.300A16.300 16.300 0 0 1 18.300 0H2z" fill="#ff8f6b"/><path d="M2 16.300A16.300 16.300 0 0 0 18.300 0H2z" fill="#d94222"/><rect x="-18" y="-9" width="18" height="18" rx="1.500" fill="#c43a1c"/><text x="-9" y="5.500" class="logo" font-size="15" text-anchor="middle">P</text></svg>
  <svg class="app" viewBox="-22.370 -25.500 44.740 54"><circle r="17.900" fill="#faf7fc" stroke="url(#gNote)" stroke-width="1.600"/><path d="M-4.500 8V-8.500L8-11V5.500M-4.500-5L8-7.500" fill="none" stroke="url(#gNote)" stroke-width="2.600"/><ellipse cx="-7" cy="8.500" rx="3.800" ry="3" fill="#a761e5"/><ellipse cx="5.500" cy="6" rx="3.800" ry="3" fill="#53a4ee"/></svg>
  <svg class="app" viewBox="-22.370 -25.500 44.740 54"><circle r="18.300" fill="#e9f3fb"/><circle r="17" fill="url(#gBlue)"/><path d="M2-10L-8 9M-2-10L8 9M-12 4h14M6 4h6" stroke="#fff" stroke-width="3" stroke-linecap="round"/><circle cx="14" cy="-13.500" r="8" fill="#f00d18"/><text x="14" y="-9.500" class="badge" text-anchor="middle">1</text><circle class="dot" cx="0" cy="24.500" r="2"/></svg>
  <svg class="app" viewBox="-22.370 -25.500 44.740 54"><path d="M-18-16.500h36v34h-36z" fill="url(#gGrey)"/><circle r="13.500" fill="#8f9496" stroke="#27292b" stroke-width="3"/><circle r="15" fill="none" stroke="#27292b" stroke-width="2" stroke-dasharray="1.500 1.500"/><circle r="8.500" fill="#909698" stroke="#303235" stroke-width="2"/><path d="M0 0h12M0 0l-7-11M0 0l-7 11" stroke="#303235" stroke-width="2.500"/><circle r="3.500" fill="#303235"/><circle cx="14" cy="-13.500" r="8" fill="#f00d18"/><text x="14" y="-9.500" class="badge" text-anchor="middle">1</text></svg>
  <svg class="app" viewBox="-22.370 -25.500 44.740 54"><path d="M-17-5l4-3L10 10v8.500z" fill="#1687d5"/><path d="M9-18.500L-18 5l4.500 4L10-9z" fill="#0d69ae"/><path d="M9-18.500l9.500 4.500v28L9 18.500z" fill="#2aa6f2"/><circle class="dot" cx="0" cy="24.500" r="2"/></svg>
  <svg class="app" viewBox="-22.370 -25.500 44.740 54"><use href="#tableau" x="-22" y="-22" width="44" height="44"/><circle class="dot" cx="0" cy="24.500" r="2"/></svg>
  <svg class="app" viewBox="-22.370 -25.500 44.740 54"><use href="#tableau" x="-22" y="-22" width="44" height="44"/><circle class="dot" cx="0" cy="24.500" r="2"/></svg>
  <svg class="app" viewBox="-22.370 -25.500 44.740 54"><use href="#tableau" x="-22" y="-22" width="44" height="44"/><circle class="dot" cx="0" cy="24.500" r="2"/></svg>
  <svg class="files" width="202" height="54" viewBox="1202 846 202 54">
    <path d="M1212.500 853v40" stroke="#935112"/>
    <path d="M1230 855h25l3 5v12h-28z" fill="#eee"/><path d="M1231 856h3v4h-3z" fill="#222"/><path d="M1226 861q0-2 2-2h8l2 3h25v25q0 1-1 1h-35q-1 0-1-1z" fill="url(#gFolder)"/>
    <path d="M1269 860h41v23h-41z" fill="#818181"/><path d="M1269 860h41v3h-41z" fill="#d0d0d0"/><path d="M1280 864h19v5h-19z" fill="#f5f5f5"/><path d="M1270 869h8M1270 872h8" stroke="#999"/><use href="#chrome" x="1295" y="877" width="15" height="15"/>
    <path d="M1314 860h41v23h-41z" fill="#f5f7f4"/><path d="M1314 859.500h41" stroke="#257949" stroke-width="2"/><path d="M1315 863h38M1315 867h26M1315 870h26M1315 873h26M1315 876h26M1315 879h26" stroke="#bbb" stroke-dasharray="3 1"/><use href="#xbadge" x="1339" y="877" width="15" height="14"/>
    <path d="M1364 855h31l-5 34q-11 4-21 0z" fill="#dfe0e2" fill-opacity=".94"/><ellipse cx="1379.500" cy="855" rx="15.500" ry="2.500" fill="#c8c9cc" stroke="#f5f5f5"/><path d="M1370 860l3 28M1379 860v29M1389 860l-3 28" stroke="#fff" stroke-opacity=".3"/>
  </svg>
</div></footer>
</body>
</html>
```
FILE: styles.css
```css
* { box-sizing: border-box; }
body { margin: 0; width: 1440px; height: 900px; overflow: hidden; background: #1c0f08; font-family: Roboto, "Liberation Sans", sans-serif; color: #333; }
svg { display: block; flex: none; }
.defs { position: absolute; }

.menubar { height: 23px; display: flex; align-items: flex-start; background: linear-gradient(90deg, #dce9f5, #ebf0fa 60%, #edf2fa); border-bottom: 1px solid #1d2733; }
.apple { margin: 2px 0 0 20px; }
.menus { flex: 1; display: flex; padding-left: 18.500px; font-size: 14px; line-height: 22px; color: #252c35; white-space: nowrap; letter-spacing: .2px; }
.m0 { width: 118.500px; letter-spacing: .55px; } .m1 { width: 41px; } .m2 { width: 49.500px; } .m3 { width: 87.500px; } .m4 { width: 89px; } .m5 { width: 53px; } .m6 { width: 64px; } .m7 { width: 70px; }
.m0 { letter-spacing: .5px; }
.tray-pct { font-size: 12.500px; }
.tray-clock { font-size: 14px; }

.window { height: 817px; display: flex; flex-direction: column; background: #f4f4f4; border-radius: 5px 5px 4px 4px; overflow: hidden; }
.titlebar { height: 22px; display: flex; align-items: center; background: linear-gradient(#e9e6e9, #d2d0d2); border-bottom: 1px solid #b1afb1; font-size: 13px; color: #333; }
.titlebar span { flex: 1; padding-left: 590px; letter-spacing: .35px; }
.lights { width: 60px; display: flex; gap: 8px; padding-left: 8px; }
.lights i { width: 12px; height: 12px; border-radius: 50%; }
.red { background: #fc4948; border: 1px solid #e03b38; }
.amber { background: #fdbc04; border: 1px solid #e0a20a; }
.green { background: #06cb2c; border: 1px solid #0cb022; }

.toolbar { height: 40px; padding: 2px 0; display: flex; }
.group { box-shadow: inset -1px 0 #d2d2d2; }
.showme { margin-left: auto; width: 99px; height: 35px; display: flex; align-items: center; gap: 5px; font-size: 12.700px; font-weight: 300; color: #555; }

.body { height: 704px; display: flex; font-size: 12.500px; }
.side { width: 210px; background: #fafafa; border-right: 1px solid #ccc; border-top: 1px solid #d0d0d0; display: flex; flex-direction: column; color: #111; font-weight: 300; }
.sidetabs { height: 28px; display: flex; line-height: 26px; color: #111; }
.sidetabs b { width: 92px; padding-left: 18px; line-height: 25px; letter-spacing: .2px; font-weight: 600; }
.layout { flex: 1; border-left: 1px solid #ccc; border-bottom: 1px solid #ccc; padding: 0 8px 0 12px; display: flex; justify-content: space-between; align-items: center; }
.layout span { line-height: 24px; padding-bottom: 2px; letter-spacing: .2px; }
.side h3 { margin: 0; font-size: 12.500px; font-weight: 500; line-height: 16px; color: #222; letter-spacing: .2px; }
.newpoint { height: 82px; padding: 18px 18px 0; border-bottom: 1px solid #ccc; }
.btns { display: flex; gap: 12px; margin-top: 11px; }
.btns button { width: 81px; height: 23px; padding: 0 0 2px; background: #fff; border: 1px solid #c8c8c8; border-radius: 2px; font: inherit; color: #111; }
.btns button + button { width: 80px; }
.sheets { height: 372px; margin: 0; padding: 19px 0 0; list-style: none; border-bottom: 1px solid #ccc; }
.sheets li { height: 20px; display: flex; align-items: flex-start; padding-left: 19px; gap: 6px; line-height: 18px; }
.sheets svg { width: 18px; height: 18px; margin-top: 2px; }
.sheets .on { background: #f2f2f2; }
.dragtext { height: 77px; padding: 16px 0 0 20px; border-bottom: 1px solid #ccc; display: flex; gap: 12px; line-height: 18px; }
.bigA { font-size: 17px; font-weight: 400; width: 11px; color: #555; }
.showtitle { height: 47px; display: flex; align-items: center; padding-left: 18px; gap: 5px; border-bottom: 1px solid #ccc; }
.showtitle span { padding-bottom: 2px; }
.size { padding: 19px 18px 0; }
.select { display: flex; align-items: center; justify-content: space-between; width: 173px; height: 25px; margin-top: 9px; padding: 0 0 0 1px; border-bottom: 1px solid #c4c4c4; letter-spacing: .4px; }

.canvas { width: 1016px; background: #fff; }
.chart { font-family: "Noto Sans", "Open Sans", sans-serif; font-size: 12px; fill: #333; }
.chart .grey { fill: #757575; font-weight: 400; }
.chart .bold { fill: #222; font-weight: 500; }
.chart .axis { fill: #222; stroke: #222; stroke-width: .15px; }
.chart .months { fill: #858585; }
.canvas h2 { margin: 0; font: 300 20.500px/26px "Open Sans", "Noto Sans", sans-serif; color: #222; -webkit-text-stroke: .2px #333; }
.age-title { height: 35px; }
.canvas .age-title { padding: 3px 0 0 19.500px; letter-spacing: .6px; }
.gender-row { display: flex; align-items: flex-start; height: 284px; }
.gender-main { width: 540px; flex: none; }
.gender-main h2 { height: 55px; padding: 22px 0 0 31px; letter-spacing: .02px; }
.legend { position: relative; margin-top: 15px; }
.gutter { width: 199px; background: #f5f5f5; }
.scroll { width: 15px; background: #fafafa; border-left: 1px solid #e2e2e2; padding: 193px 0 0 3px; }
.scroll i { display: block; width: 8px; height: 508px; border-radius: 4px; background: #c1c1c1; }

.tabs { height: 31px; display: flex; background: linear-gradient(#e0e0e0, #e6e6e6); border-top: 1px solid #c4c4c4; border-bottom: 1px solid #c6c6c6; font-size: 12.500px; font-weight: 300; color: #222; }
.tab { flex: none; padding-left: 5px; border-right: 1px solid #c4c4c4; display: flex; align-items: center; white-space: nowrap; overflow: hidden; }
.t-src { width: 131px; padding-left: 10px; gap: 5px; }
.t-cut { width: 38px; padding: 0 9px 0 0; justify-content: flex-end; }
.w85 { width: 85px; } .w107 { width: 107px; } .w127 { width: 127px; } .w61 { width: 61px; } .w93 { width: 93px; } .w81 { width: 81px; } .w35 { width: 35px; } .w55 { width: 55px; } .w133 { width: 133px; } .w86 { width: 86px; } .w135 { width: 135px; } .w104 { width: 104px; } .w73 { width: 73px; }
.w32 { width: 32px; padding-left: 9px; }
.ic { padding-left: 7px; gap: 4px; }
.active { background: #fafafa; font-weight: 700; color: #444; letter-spacing: .2px; }
.status { height: 20px; display: flex; justify-content: flex-end; background: #e4e4e4; }

.desktop { height: 60px; padding: 6px 36px 0; background: linear-gradient(90deg, #2b1610, #36201a 8%, #1e100a 30%, #170d04 70%, #432906 100%); }
.dock { height: 54px; width: 1368px; display: flex; padding-left: 2.600px; border-radius: 5px 5px 0 0; background: linear-gradient(90deg, #8d7062, #ad7660 9%, #d18262 20%, #cb7a52 27%, #b87034 32%, #c47535 36%, #e67c1e 46%, #ee8118 58%, #ec8516 68%, #e07826 76%, #d98522 82%, #c97626 91%, #b87a35 100%); }
.app { width: 44.740px; height: 54px; }
.dot { fill: #5a0808; }
.logo { font-family: "Open Sans", sans-serif; font-weight: 700; fill: #fff; }
.heic { font-family: Roboto, sans-serif; font-size: 5px; fill: #333; }
.term { font-family: "Liberation Mono", monospace; font-size: 10px; font-weight: 700; fill: #fff; }
.badge { font-family: Roboto, sans-serif; font-size: 11px; fill: #fff; }
```
